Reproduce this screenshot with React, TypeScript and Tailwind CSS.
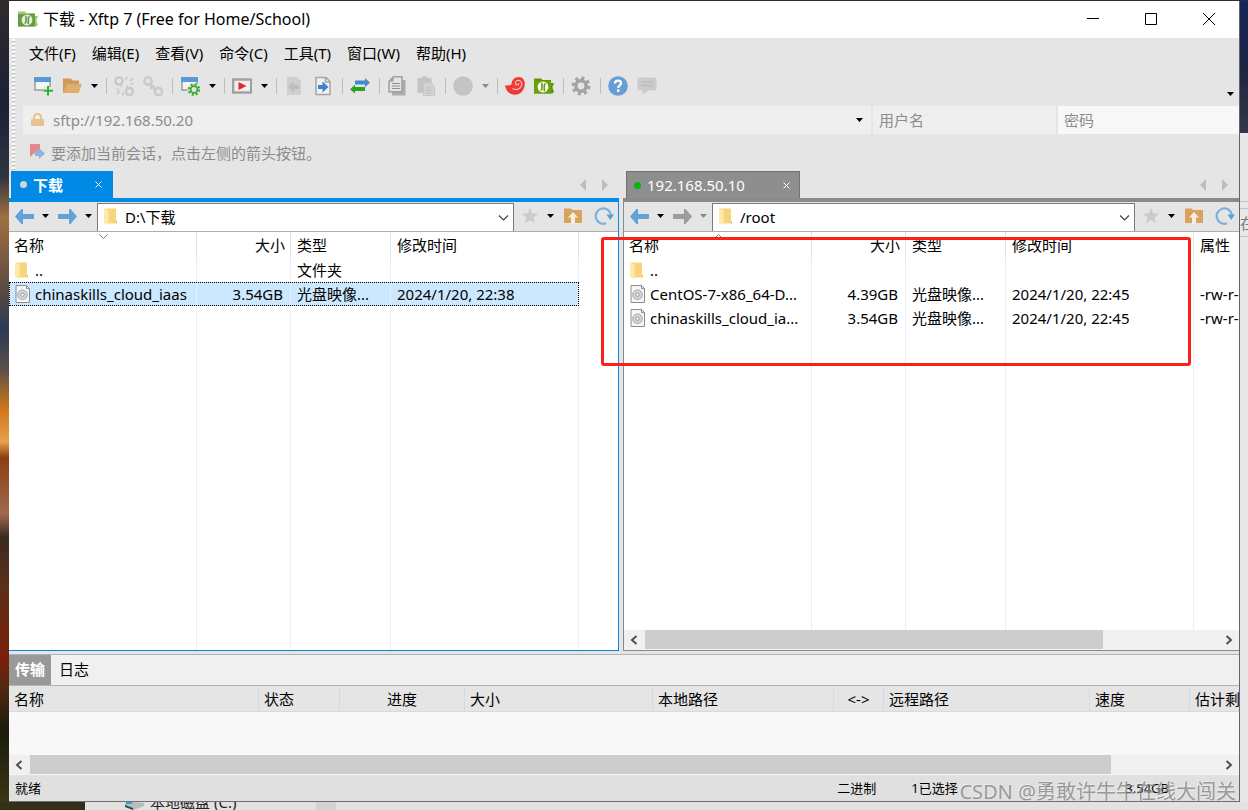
import React, { useState } from "react";

type IconProps = { className?: string };

const Caret = ({ className = "text-black" }: IconProps) => (
  <svg width="7" height="4" viewBox="0 0 7 4" className={className} fill="currentColor">
    <path d="M0 0h7L3.5 4z" />
  </svg>
);

const XftpLogo = ({ flat = false }: { flat?: boolean }) => (
  <svg width="20" height="20" viewBox="0 0 20 20">
    <path d="M0 2.5h7l1.5 1.500H17v3h3l-1.600 4.500 1.600 4.500-1.800 1.500H0z" fill={flat ? "#5f9604" : "#a3c873"} />
    <path d="M0 5h17v12.500H0z" fill={flat ? "#6aa00a" : "#659d45"} />
    <circle cx="9" cy="11" r="5.400" fill={flat ? "#fff" : "#e6f0df"} />
    <path
      d="M8 6.800v5.800c0 1-.500 1.600-1.500 1.600M10.300 15.200V9.400c0-1 .500-1.600 1.500-1.600"
      fill="none"
      stroke={flat ? "#659c06" : "#5f9b3f"}
      strokeWidth="1.600"
    />
  </svg>
);

const NewSession = () => (
  <svg width="20" height="20" viewBox="0 0 20 20">
    <path d="M2 2h15v12H2z" fill="#f4f4f4" stroke="#999" strokeWidth="1.500" />
    <path d="M1 1h17v5H1z" fill="#5a9ad4" />
    <path d="M10 11h10v9H10z" fill="#e5e5e5" />
    <path d="M15 10v9.500M10.500 14.700h9.500" stroke="#2eb12e" strokeWidth="2" />
  </svg>
);

const OpenFolder = () => (
  <svg width="20" height="20" viewBox="0 0 20 20">
    <path d="M1 2.500h8l1.500 2H17v12H1z" fill="#d09a58" />
    <path d="M5 8h15l-3.500 9H1z" fill="#dfae6c" />
  </svg>
);

const Chain = ({ broken = false }: { broken?: boolean }) => (
  <svg width="20" height="20" viewBox="0 0 20 20" fill="none" stroke="#cbcbcb" strokeWidth="2.600">
    <circle cx="5" cy="5" r="3.600" />
    <circle cx="15.500" cy="15.500" r="3.600" />
    {broken ? (
      <path d="M7 7v4M13 13V9.500M13 1l-1 3M19 2.500l-3 2.500M19.500 8h-3M2 13.500h3M3 18l3-3M9 19.500v-3" strokeWidth="1.800" />
    ) : (
      <path d="M7 7l6 6M5 9h3v3h3v3" strokeWidth="2" />
    )}
  </svg>
);

const SessionGear = () => (
  <svg width="20" height="20" viewBox="0 0 20 20">
    <path d="M2 2h15v12H2z" fill="#f4f4f4" stroke="#999" strokeWidth="1.500" />
    <path d="M1 1h17v5H1z" fill="#5a9ad4" />
    <circle cx="14" cy="13.500" r="6.500" fill="#e5e5e5" />
    <circle cx="14" cy="13.500" r="5" fill="none" stroke="#3cab32" strokeWidth="2.600" strokeDasharray="1.960" />
    <circle cx="14" cy="13.500" r="3.400" fill="none" stroke="#3cab32" strokeWidth="1.800" />
  </svg>
);

const Play = () => (
  <svg width="20" height="20" viewBox="0 0 20 20">
    <rect x="1.200" y="3.500" width="18" height="13" fill="#efefef" stroke="#a0a0a0" strokeWidth="2.400" />
    <path d="M6.500 6v8l8-4z" fill="#e6262b" />
  </svg>
);

const DocArrow = ({ active = false }: { active?: boolean }) => (
  <svg width="20" height="20" viewBox="0 0 20 20">
    {active ? (
      <>
        <path d="M3 1.500h10l4 4v13H3z" fill="#f1f1f1" stroke="#a5a5a5" strokeWidth="1.500" />
        <path d="M12.500 1.500v4.500H17" fill="none" stroke="#a5a5a5" strokeWidth="1.500" />
        <path d="M5 9h4.500V5.500L15.500 11l-6 5.500V13H5z" fill="#3d82cb" />
      </>
    ) : (
      <>
        <path d="M3 1h10l4 4v14H3z" fill="#cfcfcf" />
        <path d="M15 9h-5V5.500L4 11l6 5.500V13h5z" fill="#bebebe" />
      </>
    )}
  </svg>
);

const Transfer = () => (
  <svg width="20" height="20" viewBox="0 0 20 20">
    <path d="M5 4.500h10V2l5 4.700-5 4.300V8.500H5z" fill="#4389cd" />
    <path d="M15 11H5V8.800L0 13.200l5 4.300V15h10z" fill="#27a327" />
  </svg>
);

const CopyIcon = () => (
  <svg width="20" height="20" viewBox="0 0 20 20">
    <path d="M5 4h13.500v15.500H5z" fill="#a9acb0" />
    <path d="M6.500.800H15v15H2V5.500z" fill="#e4e4e4" stroke="#a0a0a0" strokeWidth="1.500" />
    <path d="M2 5.500h4.500V.800z" fill="#999" />
    <path d="M5 7.500h8M5 10h8M5 12.500h8" stroke="#8f8f8f" strokeWidth="1.200" />
  </svg>
);

const PasteIcon = () => (
  <svg width="20" height="20" viewBox="0 0 20 20">
    <path d="M1.500 2H6V.500h5V2h4.500v15h-14z" fill="#c4c4c4" />
    <path d="M7.500 6.500h7l4 4v9h-11z" fill="#d4d4d4" stroke="#c6c6c6" />
    <path d="M9.500 12h6M9.500 14.500h6M9.500 17h6" stroke="#bfbfbf" />
  </svg>
);

const Swirl = () => (
  <svg width="20" height="20" viewBox="0 0 20 20">
    <path
      d="M0 9c1.800.800 4 .700 6.500-.500C6.500 4 9.500 1 13.500 1c4 0 6.500 3 6.300 7-.200 6-4.300 10.800-9.800 10.800C4.500 18.800.500 14.500 0 9z"
      fill="#f03a33"
    />
    <path
      d="M7.500 12.500c4 2.200 8.800.200 9.300-4C17.100 5.500 14.500 3.800 12.300 4.500c-2.200.700-2.500 3.300-.800 4.200 1.300.600 2.500-.300 2.200-1.400"
      fill="none"
      stroke="#f3c9c6"
      strokeWidth="1.100"
    />
  </svg>
);

const Gear = () => (
  <svg width="20" height="20" viewBox="0 0 20 20" fill="none" stroke="#a3a3a3">
    <circle cx="10" cy="10" r="7.800" strokeWidth="3.400" strokeDasharray="3.063" />
    <circle cx="10" cy="10" r="5.200" strokeWidth="3.600" />
  </svg>
);

const Help = () => (
  <svg width="20" height="20" viewBox="0 0 20 20">
    <circle cx="10" cy="10" r="9.800" fill="#6a9dd6" />
    <path d="M7 7.500C7 5.500 8.300 4.700 10 4.700s3 .900 3 2.500c0 2-2.800 2.300-2.800 4.800" fill="none" stroke="#fff" strokeWidth="2.200" />
    <circle cx="10.200" cy="14.700" r="1.400" fill="#fff" />
  </svg>
);

const Chat = () => (
  <svg width="20" height="20" viewBox="0 0 20 20">
    <path d="M2 1.500h16l1.500 1.500v10L18 14.500h-7L5.500 19v-4.500H2L.500 13V3z" fill="#cbcbcb" />
    <path d="M4 6h12M4 9.500h12" stroke="#b8b8b8" strokeWidth="1.200" />
  </svg>
);

const Arrow = ({ flip = false, className = "text-[#62a2d8]" }: { flip?: boolean; className?: string }) => (
  <svg width="19" height="15" viewBox="0 0 19 15" className={className} fill="currentColor">
    <path d={flip ? "M0 5h11V0h1.500L19 7.500 12.500 15H11v-5H0z" : "M19 5H8V0H6.500L0 7.500 6.500 15H8v-5h11z"} />
  </svg>
);

const FolderIcon = () => (
  <svg width="13" height="17" viewBox="0 0 13 17" className="shrink-0">
    <path d="M1 .500h11v15H4z" fill="#f6d57c" />
    <path d="M12 13h1v2.500h-1z" fill="#e8bd52" />
    <path d="M0 .500l4.500 1.500v15L0 15z" fill="#fde9a9" />
  </svg>
);

const DiscFile = () => (
  <svg width="16" height="18" viewBox="0 0 16 18" className="shrink-0">
    <path d="M1 .500h10.500l3 3v14H1z" fill="#f5f5f5" stroke="#8e8e8e" />
    <path d="M11.500.500v3h3" fill="none" stroke="#8e8e8e" />
    <circle cx="7.500" cy="9.700" r="4.800" fill="#d3d7da" stroke="#a5a9ac" />
    <circle cx="7.500" cy="9.700" r="1.700" fill="#fff" stroke="#8e9295" />
  </svg>
);

const Star = () => (
  <svg width="18" height="18" viewBox="0 0 18 18">
    <path d="M9 1l2.200 5.300 5.800.500-4.400 3.800 1.400 5.700L9 13.200l-5 3.100 1.400-5.700L1 6.800l5.800-.500z" fill="#cbcbcb" />
  </svg>
);

const FolderUp = () => (
  <svg width="18" height="18" viewBox="0 0 18 18">
    <path d="M0 1.500h7l1 1.500h10v13H0z" fill="#d9a25d" />
    <path d="M9 5l5 5.500h-3V17H7v-6.500H4z" fill="#f6ede1" />
  </svg>
);

const Refresh = () => (
  <svg width="20" height="20" viewBox="0 0 20 20">
    <path d="M12 17.300A7.700 7.700 0 1 1 17 9" fill="none" stroke="#7db1dd" strokeWidth="2.200" />
    <path d="M12.500 8.500H20L16.200 14z" fill="#5b9fd8" />
  </svg>
);

const Divider = () => (
  <div className="w-2 pl-1">
    <div className="h-4 w-px bg-[#bdbdbd]" />
  </div>
);

const ToolButton = ({ label, children }: { label: string; children: React.ReactNode }) => (
  <button type="button" aria-label={label} className="flex h-6 w-[29px] items-center pl-1">
    {children}
  </button>
);

const CaretButton = ({ label, dim = false }: { label: string; dim?: boolean }) => (
  <button type="button" aria-label={label} className="flex h-6 w-[15px] items-center justify-center">
    <Caret className={dim ? "text-[#8a8a8a]" : "text-black"} />
  </button>
);

const menus = ["文件(F)", "编辑(E)", "查看(V)", "命令(C)", "工具(T)", "窗口(W)", "帮助(H)"];

const Toolbar = () => (
  <div className="flex h-9 items-start pb-1 pl-1.5">
    <div className="flex h-8 flex-1 items-center">
      <ToolButton label="新建"><NewSession /></ToolButton>
      <ToolButton label="打开"><OpenFolder /></ToolButton>
      <CaretButton label="打开选项" />
      <Divider />
      <ToolButton label="断开"><Chain broken /></ToolButton>
      <ToolButton label="重新连接"><Chain /></ToolButton>
      <Divider />
      <ToolButton label="属性"><SessionGear /></ToolButton>
      <CaretButton label="属性选项" />
      <Divider />
      <ToolButton label="运行"><Play /></ToolButton>
      <CaretButton label="运行选项" />
      <Divider />
      <ToolButton label="下载文件"><DocArrow /></ToolButton>
      <ToolButton label="上传文件"><DocArrow active /></ToolButton>
      <Divider />
      <ToolButton label="同步"><Transfer /></ToolButton>
      <Divider />
      <ToolButton label="复制"><CopyIcon /></ToolButton>
      <ToolButton label="粘贴"><PasteIcon /></ToolButton>
      <Divider />
      <ToolButton label="编码">
        <svg width="20" height="20" viewBox="0 0 20 20"><circle cx="10" cy="10" r="9.800" fill="#c4c4c4" /></svg>
      </ToolButton>
      <CaretButton label="编码选项" dim />
      <Divider />
      <ToolButton label="Xshell"><Swirl /></ToolButton>
      <ToolButton label="Xftp"><XftpLogo flat /></ToolButton>
      <Divider />
      <ToolButton label="选项"><Gear /></ToolButton>
      <Divider />
      <ToolButton label="帮助"><Help /></ToolButton>
      <ToolButton label="反馈"><Chat /></ToolButton>
    </div>
    <button type="button" aria-label="更多" className="mt-3 flex h-6 w-[18px] items-center justify-center">
      <Caret />
    </button>
  </div>
);

interface FileRow {
  name: string;
  size: string;
  type: string;
  date: string;
  attr?: string;
  folder?: boolean;
  selected?: boolean;
}

const localFiles: FileRow[] = [
  { name: "..", size: "", type: "文件夹", date: "", folder: true },
  { name: "chinaskills_cloud_iaas", size: "3.54GB", type: "光盘映像...", date: "2024/1/20, 22:38", selected: true },
];

const remoteFiles: FileRow[] = [
  { name: "..", size: "", type: "", date: "", attr: "", folder: true },
  { name: "CentOS-7-x86_64-D...", size: "4.39GB", type: "光盘映像...", date: "2024/1/20, 22:45", attr: "-rw-r--r--" },
  { name: "chinaskills_cloud_ia...", size: "3.54GB", type: "光盘映像...", date: "2024/1/20, 22:45", attr: "-rw-r--r--" },
];

const FileTable = ({ files, remote = false }: { files: FileRow[]; remote?: boolean }) => {
  const line = "border-r border-[#e6effa] p-0 font-normal";
  const headLine = "border-r border-[#e2e2e2] p-0 font-normal";
  return (
    <table className={`h-full table-fixed border-separate border-spacing-0 text-left whitespace-nowrap ${remote ? "w-[670px]" : "w-[570px]"}`}>
      <colgroup>
        <col className="w-[188px]" />
        <col className="w-[94px]" />
        <col className="w-[100px]" />
        <col className="w-[188px]" />
        {remote && <col className="w-[100px]" />}
      </colgroup>
      <thead>
        <tr className="h-[26px]">
          <th className={`${headLine} relative pl-[5px]`}>
            名称
            <svg width="9" height="5" viewBox="0 0 9 5" className="absolute top-0.5 left-[90px]" fill="none" stroke="#777">
              <path d={remote ? "M.500 4.500l4-4 4 4" : "M.500.500l4 4 4-4"} />
            </svg>
          </th>
          <th className={`${headLine} pr-[5px] text-right`}>大小</th>
          <th className={`${headLine} pl-1.5`}>类型</th>
          <th className={`${headLine} pl-1.5`}>修改时间</th>
          {remote && <th className="p-0 pl-1.5 font-normal">属性</th>}
        </tr>
      </thead>
      <tbody>
        {files.map((f) => (
          <tr
            key={f.name}
            className={`h-6 ${f.selected ? "bg-[#cce8ff] outline-1 -outline-offset-1 outline-black outline-dotted" : ""}`}
          >
            <td className={`${line} pl-1.5`}>
              <div className="flex items-center gap-1">
                <span className="flex w-4">{f.folder ? <FolderIcon /> : <DiscFile />}</span>
                <span>{f.name}</span>
              </div>
            </td>
            <td className={`${line} pr-[7px] text-right`}>{f.size}</td>
            <td className={`${line} pl-1.5`}>{f.type}</td>
            <td className={`${line} pl-1.5`}>{f.date}</td>
            {remote && <td className="p-0 pl-1.5">{f.attr}</td>}
          </tr>
        ))}
        <tr>
          <td className={line} />
          <td className={line} />
          <td className={line} />
          <td className={line} />
          {remote && <td />}
        </tr>
      </tbody>
    </table>
  );
};

const PathBar = ({ path, remote = false }: { path: string; remote?: boolean }) => (
  <div className="flex h-[30px] border-b border-[#adadad] bg-[#e5e5e5] pt-px">
    <div className="flex w-[88px] items-center pb-0.5">
      <button type="button" aria-label="后退" className="flex w-[29px] items-center pl-1.5"><Arrow /></button>
      <button type="button" aria-label="后退历史" className="flex w-3.5 justify-center"><Caret /></button>
      <button type="button" aria-label="前进" className="flex w-[29px] items-center pl-1.5">
        <Arrow flip className={remote ? "text-[#9c9c9c]" : "text-[#62a2d8]"} />
      </button>
      <button type="button" aria-label="前进历史" className="flex w-3.5 justify-center">
        <Caret className={remote ? "text-[#8a8a8a]" : "text-black"} />
      </button>
    </div>
    <div className="relative flex flex-1 items-center gap-2 border border-b-0 border-[#7a7a7a] bg-white pb-0.5 pl-1.5">
      <FolderIcon />
      <select aria-label="路径" defaultValue={path} className="h-full flex-1 appearance-none outline-none">
        <option>{path}</option>
      </select>
      <svg width="11" height="6" viewBox="0 0 11 6" className="pointer-events-none absolute top-[11px] right-1" fill="none" stroke="#444" strokeWidth="1.200">
        <path d="M1 .500l4.500 4.500L10 .500" />
      </svg>
    </div>
    <div className="flex w-[104px] items-center pb-0.5">
      <button type="button" aria-label="收藏" className="flex w-[29px] pl-[7px]"><Star /></button>
      <button type="button" aria-label="收藏列表" className="flex w-3.5 justify-center"><Caret /></button>
      <button type="button" aria-label="上一级" className="flex w-[29px] pl-[7px]"><FolderUp /></button>
      <button type="button" aria-label="刷新" className="flex w-[29px] pl-2"><Refresh /></button>
    </div>
  </div>
);

const TabArrows = () => (
  <div className="ml-auto flex items-center gap-4 pr-[11px]">
    <button type="button" aria-label="上一个标签">
      <svg width="6" height="12" viewBox="0 0 6 12"><path d="M6 0v12L0 6z" fill="#bdbdbd" /></svg>
    </button>
    <button type="button" aria-label="下一个标签">
      <svg width="6" height="12" viewBox="0 0 6 12"><path d="M0 0v12l6-6z" fill="#bdbdbd" /></svg>
    </button>
  </div>
);

const CloseX = () => (
  <svg width="7" height="7" viewBox="0 0 7 7" stroke="#fff">
    <path d="M.500.500l6 6M6.500.500l-6 6" />
  </svg>
);

const ScrollBar = ({ thumb }: { thumb: string }) => (
  <div className="flex h-5 shrink-0 items-stretch border-b border-[#f4f4f4] bg-[#f0f0f0]">
    <button type="button" aria-label="向左滚动" className="flex w-[21px] items-center justify-center pr-0.5">
      <svg width="8" height="10" viewBox="0 0 8 10" fill="none" stroke="#505050" strokeWidth="2"><path d="M6.500 1l-4.500 4 4.500 4" /></svg>
    </button>
    <div className="flex-1">
      <div className={`h-full bg-[#cdcdcd] ${thumb}`} />
    </div>
    <button type="button" aria-label="向右滚动" className="flex w-[21px] items-center justify-center">
      <svg width="8" height="10" viewBox="0 0 8 10" fill="none" stroke="#505050" strokeWidth="2"><path d="M1.500 1L6 5 1.500 9" /></svg>
    </button>
  </div>
);

const queueColumns = [
  { label: "名称", width: "w-[250px]" },
  { label: "状态", width: "w-[81px]" },
  { label: "进度", width: "w-[125px]", center: true },
  { label: "大小", width: "w-[188px]" },
  { label: "本地路径", width: "w-[181px]" },
  { label: "<->", width: "w-[50px]", center: true },
  { label: "远程路径", width: "w-[206px]" },
  { label: "速度", width: "w-[100px]" },
  { label: "估计剩余...", width: "w-[130px]" },
];

const TransferPanel = () => {
  const [tab, setTab] = useState("传输");
  return (
    <section className="mt-[3px] shrink-0 border-t border-[#b4b4b4]">
      <div className="flex h-[31px] border-b border-[#b4b4b4] bg-[#f0f0f0]">
        {["传输", "日志"].map((t) => (
          <button
            key={t}
            type="button"
            onClick={() => setTab(t)}
            className={tab === t ? "w-[42px] bg-[#999] pb-0.5 font-bold text-white" : "px-2 pb-0.5"}
          >
            {t}
          </button>
        ))}
      </div>
      <div className="h-[69px] overflow-hidden bg-[#f8f8f8]">
        <table className="w-[1311px] table-fixed border-separate border-spacing-0 text-left whitespace-nowrap">
          <thead>
            <tr className="h-[26px] bg-[#e5e5e5]">
              {queueColumns.map((c) => (
                <th
                  key={c.label}
                  className={`border-r border-b border-[#d3dbe6] p-0 font-normal ${c.width} ${c.center ? "text-center" : "pl-[5px]"}`}
                >
                  {c.label}
                </th>
              ))}
            </tr>
          </thead>
        </table>
      </div>
      <ScrollBar thumb="w-[91%]" />
    </section>
  );
};

export default function App() {
  return (
    <div className="relative flex h-screen flex-col overflow-hidden bg-[#33292c] pt-px font-['Noto_Sans','Noto_Sans_CJK_SC',sans-serif] text-[15px] leading-5 text-black">
      <div className="flex min-h-0 flex-1">
        <div className="w-[9px] shrink-0 bg-[linear-gradient(#2f2b2e,#1c2036_13%,#303540_22%,#a07040_27%,#5a4a42_36%,#2a3a55_41%,#5a5048_46%,#d07818_51%,#e8a050_55%,#8a4010_57%,#a06a50_64%,#3a2a20_67%,#5a3018_73%,#7a2008_82%,#502810_86%,#1a1c0c_91%,#3a3515)]" />
        <main className="flex min-w-0 flex-1 flex-col border-b border-[#6f6f6f] bg-[#e5e5e5]">
          <header className="flex h-[37px] shrink-0 items-center bg-white pr-px pb-0.5 pl-[9px]">
            <XftpLogo />
            <h1 className="flex-1 pl-[5px] text-[16px]">下载 - Xftp 7 (Free for Home/School)</h1>
            <button type="button" aria-label="最小化" className="flex h-full w-[58px] items-center justify-center">
              <svg width="12" height="12" viewBox="0 0 12 12" stroke="#000"><path d="M0 5.500h12" /></svg>
            </button>
            <button type="button" aria-label="最大化" className="flex h-full w-[58px] items-center justify-center">
              <svg width="12" height="12" viewBox="0 0 12 12" stroke="#000" fill="none"><path d="M.500.500h11v11H.500z" /></svg>
            </button>
            <button type="button" aria-label="关闭" className="flex h-full w-[58px] items-center justify-center">
              <svg width="12" height="12" viewBox="0 0 12 12" stroke="#000"><path d="M0 0l12 12M12 0L0 12" /></svg>
            </button>
          </header>

          <div className="flex shrink-0">
            <div className="w-3.5 py-px pl-[3px]">
              <div className="h-full w-[3px] bg-[repeating-linear-gradient(#fff_0_2px,#b9b9b9_2px_3px,#e5e5e5_3px_4px)]" />
            </div>
            <div className="min-w-0 flex-1">
              <nav className="flex h-8 items-center gap-4 pb-0.5 pl-1.5">
                {menus.map((m) => (
                  <button key={m} type="button">{m}</button>
                ))}
              </nav>
              <Toolbar />
              <div className="flex h-7 gap-0.5 text-[#8c8c8c]">
                <div className="flex min-w-0 flex-1 items-center bg-[#efefef] pr-2 pl-2">
                  <svg width="13" height="14" viewBox="0 0 13 14" className="shrink-0">
                    <path d="M3 6V4a3.500 3 0 0 1 7 0v2" fill="none" stroke="#e9c38e" strokeWidth="2" />
                    <rect x="0" y="6" width="13" height="7" rx="1" fill="#e9c38e" />
                  </svg>
                  <input aria-label="主机" defaultValue="sftp://192.168.50.20" className="ml-[9px] min-w-0 flex-1 bg-transparent outline-none" />
                  <button type="button" aria-label="主机列表"><Caret /></button>
                </div>
                <input aria-label="用户名" placeholder="用户名" className="w-[183px] bg-[#efefef] px-1.5 outline-none placeholder:text-[#8c8c8c]" />
                <input aria-label="密码" type="password" placeholder="密码" className="w-[181px] bg-[#f8f8f8] px-1.5 outline-none placeholder:text-[#8c8c8c]" />
              </div>
              <div className="flex h-[37px] items-center gap-1.5 pl-1.5 text-[#8c8c8c]">
                <svg width="16" height="17" viewBox="0 0 16 17">
                  <path d="M1 0h10v12l-5-3.500L1 13z" fill="#e5888c" />
                  <path d="M6 7h4V4l6 5.500-6 5.500v-3H6z" fill="#8db4dd" />
                </svg>
                <p>要添加当前会话，点击左侧的箭头按钮。</p>
              </div>
            </div>
          </div>

          <div className="grid min-h-0 flex-1 grid-cols-[610fr_616fr] gap-1">
            <section className="flex min-w-0 flex-col">
              <div className="flex h-[27px] shrink-0 pl-0.5">
                <div className="flex w-[102px] items-center bg-[#008ae5] pr-[11px] pl-[9px] text-white">
                  <span className="mr-1.5 size-[7px] rounded-full bg-[#d5d5d5]" />
                  <span className="flex-1 font-bold">下载</span>
                  <button type="button" aria-label="关闭标签"><CloseX /></button>
                </div>
                <TabArrows />
              </div>
              <div className="flex min-h-0 flex-1 flex-col border-t-4 border-r border-b border-[#008ae5] bg-white">
                <PathBar path="D:\下载" />
                <div className="min-h-0 flex-1 overflow-hidden">
                  <FileTable files={localFiles} />
                </div>
              </div>
            </section>

            <section className="flex min-w-0 flex-col">
              <div className="flex h-[27px] shrink-0 pl-[3px]">
                <div className="flex w-[174px] items-center border border-b-0 border-[#727272] bg-[#8e8e8e] pr-[9px] pl-[7px] text-white">
                  <span className="mr-1.5 size-[7px] rounded-full bg-[#06b80c]" />
                  <span className="flex-1">192.168.50.10</span>
                  <button type="button" aria-label="关闭标签"><CloseX /></button>
                </div>
                <TabArrows />
              </div>
              <div className="flex min-h-0 flex-1 flex-col border-t-4 border-b border-l border-[#8a8a8a] bg-white">
                <PathBar path="/root" remote />
                <div className="min-h-0 flex-1 overflow-hidden">
                  <FileTable files={remoteFiles} remote />
                </div>
                <ScrollBar thumb="w-[80%]" />
              </div>
            </section>
          </div>

          <TransferPanel />

          <footer className="flex h-[26px] shrink-0 items-center bg-[#e0e0e0] pr-[70px] pl-1.5 text-[13px]">
            <span className="flex-1">就绪</span>
            <span className="w-[74px]">二进制</span>
            <span className="w-[214px]">1已选择</span>
            <span>3.54GB</span>
          </footer>
        </main>
        <div className="w-[9px] shrink-0 overflow-hidden border-l border-[#60646c] bg-[#e8e8e8]">
          <div className="h-[132px] bg-[linear-gradient(#14265c,#1c2440_50%,#343848)]" />
          <div className="mt-[68px] h-2 border-y border-[#c4c4c4]" />
          <div className="h-7 border-b border-[#c4c4c4] pt-1 text-[#777]">在</div>
        </div>
      </div>

      <div className="flex h-2 shrink-0 items-end overflow-hidden bg-[#e2e2e2]">
        <div className="h-2 w-[85px] bg-[#33301a]" />
        <div className="flex w-[231px] items-end gap-1.5 pl-10 leading-4 text-[#222]">
          <svg width="19" height="8" viewBox="0 0 19 8">
            <path d="M0 1l8-1 11 1v3l-11 4-8-4z" fill="#b9bcbf" />
            <path d="M0 3l8 3v2L0 5z" fill="#3c4044" />
            <path d="M1 0h6v2H1z" fill="#28a8e0" />
          </svg>
          <span>本地磁盘 (C:)</span>
        </div>
        <div className="h-2 w-5 bg-[#d2d2d2]" />
      </div>

      {/* highlight around the remote files */}
      <div className="pointer-events-none absolute top-[237px] left-[601px] h-[129px] w-[590px] rounded-[3px] border-3 border-[#fb2116]" />

      <p className="pointer-events-none absolute right-3 bottom-1.5 text-[20px] leading-6 whitespace-nowrap text-[#777]/70 [text-shadow:-1px_-1px_0_rgba(255,255,255,0.4)]">
        CSDN @勇敢许牛牛在线大闯关
      </p>
    </div>
  );
}
